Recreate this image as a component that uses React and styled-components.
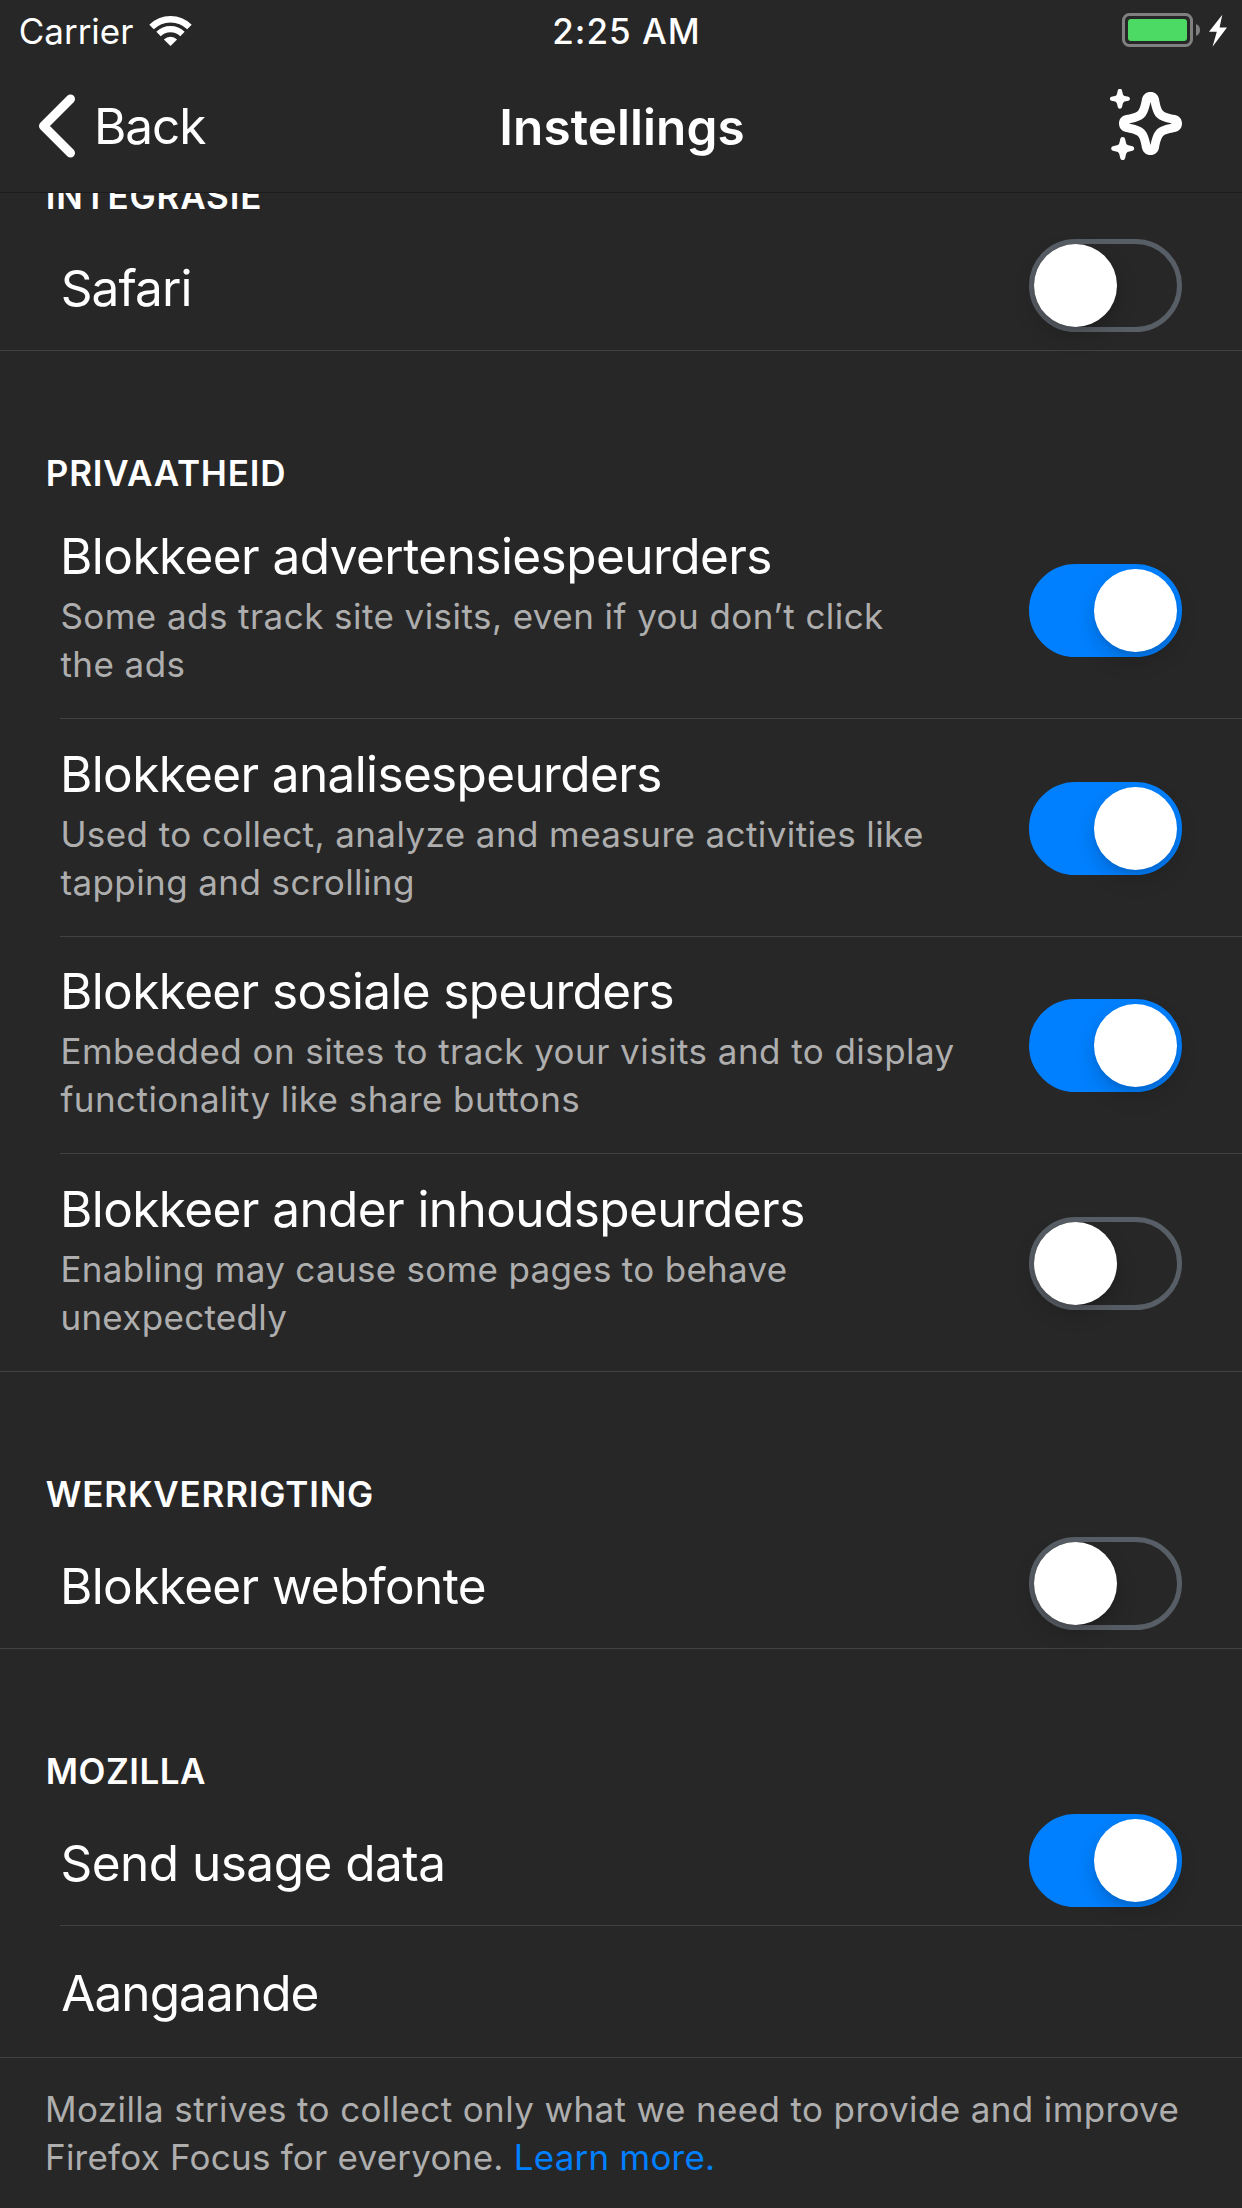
import React, { useState } from "react";
import styled, { createGlobalStyle, css } from "styled-components";

const color = {
  background: "#272727",
  text: "#ffffff",
  muted: "#aeaeae",
  separator: "#424242",
  navLine: "#1b1b1b",
  accent: "#0080ff",
  track: "#585e65",
  battery: "#4cd964",
};

const GlobalStyle = createGlobalStyle`
  * { box-sizing: border-box; }
  body {
    margin: 0;
    background: ${color.background};
    color: ${color.text};
    font-family: Inter, "Liberation Sans", sans-serif;
  }
`;

const Screen = styled.div`
  display: flex;
  flex-direction: column;
  width: 1242px;
  height: 2208px;
  overflow: hidden;
  background: ${color.background};
`;

const StatusBar = styled.div`
  display: grid;
  grid-template-columns: 1fr auto 1fr;
  align-items: center;
  flex: none;
  height: 62px;
  font-size: 35px;
  line-height: 42px;
`;

const Carrier = styled.div`
  display: flex;
  align-items: center;
  gap: 16px;
  padding-left: 18.7px;
`;

const Clock = styled.div`
  padding-left: 11px;
  font-weight: 500;
  letter-spacing: 1px;
`;

const Power = styled.div`
  display: flex;
  justify-content: flex-end;
  padding-right: 14px;
`;

const Icon = styled.svg`
  display: block;
  flex: none;
`;

const NavBar = styled.header`
  display: grid;
  grid-template-columns: 1fr auto 1fr;
  align-items: center;
  flex: none;
  height: 131px;
  border-bottom: 1px solid ${color.navLine};
  font-size: 49.5px;
  line-height: 60px;
`;

const BackButton = styled.button`
  display: flex;
  align-items: center;
  gap: 17px;
  padding: 0 0 2px 38px;
  border: 0;
  background: none;
  color: inherit;
  font: inherit;
  letter-spacing: -1.05px;
`;

const NavTitle = styled.h1`
  margin: 0;
  padding-left: 2px;
  font-size: inherit;
  font-weight: 600;
  letter-spacing: 0.05px;
`;

const TipsButton = styled.button`
  justify-self: end;
  padding: 0;
  margin-right: 59px;
  border: 0;
  background: none;
  color: inherit;
`;

const Content = styled.main`
  flex: 1;
  overflow: hidden;
`;

const SectionHeader = styled.h2`
  display: flex;
  align-items: flex-end;
  height: 145px;
  margin: ${(p) => (p.$scrolled ? "-119px" : "0")} 0 0;
  padding: 0 0 2px 45.8px;
  font-size: 35px;
  font-weight: 600;
  line-height: 42px;
  letter-spacing: ${(p) => p.$tracking}px;
`;

const Row = styled.div`
  display: flex;
  align-items: center;
  justify-content: space-between;
  height: 132px;
  padding: 0 60px 0 ${(p) => (p.$last ? "60px" : "0")};
  margin-left: ${(p) => (p.$last ? "0" : "60px")};
  border-bottom: 1px solid ${color.separator};
  ${(p) =>
    p.$detailed &&
    css`
      height: 217.67px;
    `}
  ${(p) =>
    p.$leading &&
    css`
      height: 223px;
      padding-top: 5px;
    `}
`;

const Labels = styled.div`
  padding-top: ${(p) => (p.$detailed ? "0" : p.$plain ? "4px" : "7px")};
  margin-bottom: ${(p) => (p.$detailed ? "5px" : "0")};
`;

const Label = styled.div`
  padding-left: ${(p) => p.$indent || 0}px;
  font-size: 49.5px;
  line-height: 60px;
  white-space: nowrap;
  letter-spacing: ${(p) => p.$tracking}px;
`;

const Description = styled.p`
  margin: 6px 0 0 0.4px;
  width: 900px;
  color: ${color.muted};
  font-size: 35px;
  line-height: 48px;
  letter-spacing: ${(p) => p.$tracking}px;
`;

const Track = styled.button`
  flex: none;
  width: 153px;
  height: 93px;
  margin: 2px 0 0;
  padding: 0;
  border: 5px solid ${(p) => (p.$on ? color.accent : color.track)};
  border-radius: 47px;
  background: ${(p) => (p.$on ? color.accent : "transparent")};
  display: flex;
  justify-content: ${(p) => (p.$on ? "flex-end" : "flex-start")};
`;

const Knob = styled.span`
  width: 83px;
  height: 83px;
  border-radius: 50%;
  background: #fff;
  box-shadow: 0 9px 21px rgba(0, 0, 0, 0.17), 0 3px 4px rgba(0, 0, 0, 0.07);
`;

const Footer = styled.p`
  margin: 0;
  padding: 27px 20px 0 45px;
  color: ${color.muted};
  font-size: 35px;
  line-height: 48px;
  letter-spacing: 0.37px;
`;

const FooterLine = styled.span`
  display: block;
  letter-spacing: ${(p) => p.$tracking}px;
`;

const LearnMore = styled.a`
  color: ${color.accent};
`;

const WifiIcon = () => (
  <Icon width="43" height="31" viewBox="149.5 15 43 31" fill="none" stroke="#fff">
    <path d="M152.05 26.05a26.8 26.8 0 0 1 37.9 0" strokeWidth="6.4" />
    <path d="M159.05 33.05a16.9 16.9 0 0 1 23.9 0" strokeWidth="6.2" />
    <path d="M171 45l-6.6-6.6a9.3 9.3 0 0 1 13.2 0z" fill="#fff" stroke="none" />
  </Icon>
);

const BatteryIcon = () => (
  <Icon width="106" height="36" viewBox="1122 13 106 36">
    <rect x="1123.5" y="14.5" width="68" height="31" rx="6" fill="none" stroke="#808080" strokeWidth="3" />
    <rect x="1128" y="19" width="59" height="22" rx="3" fill={color.battery} />
    <path d="M1196 24c2.6 1 4 3 4 6s-1.4 5-4 6z" fill="#808080" />
    <path d="M1222.3 14.7L1209 31.7h7.8l-4.3 15L1227 27.4h-7.4z" fill="#fff" />
  </Icon>
);

const ChevronIcon = () => (
  <Icon width="39" height="66" viewBox="38 93.5 39 66" fill="none" stroke="#fff" strokeWidth="9" strokeLinecap="round" strokeLinejoin="round">
    <path d="M70.5 99.5l-27 27 27 27" />
  </Icon>
);

const smallStar =
  "M0-10C1.5-10 2-9 2.3-7.5 2.9-4.6 3.2-3.8 3.8-3.4 4.3-2.9 5-2.7 7.5-2.2 9-1.9 10-1.5 10 0S9 1.9 7.5 2.2C5 2.7 4.3 2.9 3.8 3.4 3.2 3.8 2.9 4.6 2.3 7.5 2 9 1.5 10 0 10S-2 9-2.3 7.5C-2.9 4.6-3.2 3.8-3.8 3.4-4.3 2.9-5 2.7-7.5 2.2-9 1.9-10 1.5-10 0S-9-1.9-7.5-2.2C-5-2.7-4.3-2.9-3.8-3.4-3.2-3.8-2.9-4.6-2.3-7.5-2-9-1.5-10 0-10z";

const bigStar =
  "M0-31.5C4.5-31.5 7.6-28.8 8.5-24.5 9.3-20.2 10.3-14.8 12.6-12.6S20.2-9.3 24.5-8.5C28.8-7.6 31.5-4.5 31.5 0S28.8 7.6 24.5 8.5C20.2 9.3 14.8 10.3 12.6 12.6S9.3 20.2 8.5 24.5C7.6 28.8 4.5 31.5 0 31.5S-7.6 28.8-8.5 24.5C-9.3 20.2-10.3 14.8-12.6 12.6S-20.2 9.3-24.5 8.5C-28.8 7.6-31.5 4.5-31.5 0S-28.8-7.6-24.5-8.5C-20.2-9.3-14.8-10.3-12.6-12.6S-9.3-20.2-8.5-24.5C-7.6-28.8-4.5-31.5 0-31.5z" +
  "M0-21.5C-1.7-13.5-3.4-9-6.2-6.2S-13.5-1.7-21.5 0C-13.5 1.7-9 3.4-6.2 6.2S-1.7 13.5 0 21.5C1.7 13.5 3.4 9 6.2 6.2S13.5 1.7 21.5 0C13.5-1.7 9-3.4 6.2-6.2S1.7-13.5 0-21.5z";

const SparklesIcon = () => (
  <Icon width="73" height="76" viewBox="1110 89 73 76" fill="#fff">
    <path d={bigStar} fillRule="evenodd" transform="translate(1150.5 123.5)" />
    <path d={smallStar} transform="translate(1119.9 98.8)" />
    <path d={smallStar} transform="translate(1122.7 148.5) scale(1.15)" />
  </Icon>
);

const sections = [
  {
    title: "INTEGRASIE",
    tracking: 0.8,
    rows: [{ label: "Safari", on: false, tracking: -0.9, indent: 0.7 }],
  },
  {
    title: "PRIVAATHEID",
    tracking: 0.8,
    rows: [
      {
        label: "Blokkeer advertensiespeurders",
        lines: ["Some ads track site visits, even if you don’t click", "the ads"],
        on: true,
        tracking: -0.56,
        lineTracking: 0.44,
      },
      {
        label: "Blokkeer analisespeurders",
        lines: ["Used to collect, analyze and measure activities like", "tapping and scrolling"],
        on: true,
        tracking: -0.64,
        lineTracking: 0.41,
      },
      {
        label: "Blokkeer sosiale speurders",
        lines: ["Embedded on sites to track your visits and to display", "functionality like share buttons"],
        on: true,
        tracking: -0.63,
        lineTracking: 0.45,
      },
      {
        label: "Blokkeer ander inhoudspeurders",
        lines: ["Enabling may cause some pages to behave", "unexpectedly"],
        on: false,
        tracking: -0.59,
        lineTracking: 0.3,
      },
    ],
  },
  {
    title: "WERKVERRIGTING",
    tracking: 0.8,
    rows: [{ label: "Blokkeer webfonte", on: false, tracking: -0.63 }],
  },
  {
    title: "MOZILLA",
    tracking: 0.5,
    rows: [
      { label: "Send usage data", on: true, tracking: -0.52, indent: 0.5 },
      { label: "Aangaande", tracking: -0.91, indent: 1.2 },
    ],
  },
];

function Toggle({ label, initial }) {
  const [on, setOn] = useState(initial);
  return (
    <Track type="button" role="switch" aria-checked={on} aria-label={label} $on={on} onClick={() => setOn(!on)}>
      <Knob />
    </Track>
  );
}

function SettingRow({ row, first, last }) {
  const detailed = Boolean(row.lines);
  const plain = row.on === undefined;
  return (
    <Row $detailed={detailed} $leading={detailed && first} $last={last}>
      <Labels $detailed={detailed} $plain={plain}>
        <Label $tracking={row.tracking} $indent={row.indent}>
          {row.label}
        </Label>
        {detailed && (
          <Description $tracking={row.lineTracking}>
            {row.lines[0]}
            <br />
            {row.lines[1]}
          </Description>
        )}
      </Labels>
      {!plain && <Toggle label={row.label} initial={row.on} />}
    </Row>
  );
}

export default function App() {
  return (
    <>
      <GlobalStyle />
      <Screen>
        <StatusBar>
          <Carrier>
            Carrier
            <WifiIcon />
          </Carrier>
          <Clock>2:25 AM</Clock>
          <Power>
            <BatteryIcon />
          </Power>
        </StatusBar>
        <NavBar>
          <BackButton type="button">
            <ChevronIcon />
            Back
          </BackButton>
          <NavTitle>Instellings</NavTitle>
          <TipsButton type="button" aria-label="Tips">
            <SparklesIcon />
          </TipsButton>
        </NavBar>
        <Content>
          {sections.map((section, s) => (
            <section key={section.title}>
              <SectionHeader $scrolled={s === 0} $tracking={section.tracking}>
                {section.title}
              </SectionHeader>
              {section.rows.map((row, i) => (
                <SettingRow key={row.label} row={row} first={i === 0} last={i === section.rows.length - 1} />
              ))}
            </section>
          ))}
          <Footer>
            <FooterLine $tracking={0.37}>
              Mozilla strives to collect only what we need to provide and improve
            </FooterLine>
            <FooterLine $tracking={0.23}>
              Firefox Focus for everyone. <LearnMore>Learn more.</LearnMore>
            </FooterLine>
          </Footer>
        </Content>
      </Screen>
    </>
  );
}
